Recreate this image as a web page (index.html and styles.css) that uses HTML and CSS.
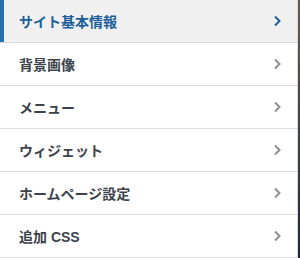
FILE: index.html
```html
<!DOCTYPE html>
<html lang="ja">

<head>
    <meta charset="UTF-8">
    <meta name="viewport" content="width=device-width, initial-scale=1.0">
    <title>カスタマイズ</title>
    <link rel="stylesheet" href="styles.css">
</head>

<body>
    <div class="frame">
        <ul class="panel-list">
            <li class="panel-item active">
                <span>サイト基本情報</span>
                <svg class="chevron" viewBox="0 0 9 12"><path d="M2 1.5 6.5 6 2 10.5" /></svg>
            </li>
            <li class="panel-item">
                <span>背景画像</span>
                <svg class="chevron" viewBox="0 0 9 12"><path d="M2 1.5 6.5 6 2 10.5" /></svg>
            </li>
            <li class="panel-item">
                <span>メニュー</span>
                <svg class="chevron" viewBox="0 0 9 12"><path d="M2 1.5 6.5 6 2 10.5" /></svg>
            </li>
            <li class="panel-item">
                <span>ウィジェット</span>
                <svg class="chevron" viewBox="0 0 9 12"><path d="M2 1.5 6.5 6 2 10.5" /></svg>
            </li>
            <li class="panel-item">
                <span>ホームページ設定</span>
                <svg class="chevron" viewBox="0 0 9 12"><path d="M2 1.5 6.5 6 2 10.5" /></svg>
            </li>
            <li class="panel-item">
                <span>追加 CSS</span>
                <svg class="chevron" viewBox="0 0 9 12"><path d="M2 1.5 6.5 6 2 10.5" /></svg>
            </li>
        </ul>
        <div class="edge"></div>
    </div>
</body>

</html>
```

FILE: styles.css
```css
body {
    margin: 0;
    background-color: white;
    font-family: "Liberation Sans", "Noto Sans CJK JP", sans-serif;
}

.frame {
    display: flex;
    width: 300px;
    height: 258px;
}

.panel-list {
    list-style: none;
    margin: 0;
    padding: 0;
    width: 297px;
    border-right: 1px solid #dcdcde;
    background-color: white;
}

.edge {
    flex: 1;
    background: linear-gradient(#6b5a4c, #3a3f4a 60%, #1d2740);
}

.panel-item {
    display: flex;
    align-items: center;
    justify-content: space-between;
    height: 42px;
    padding: 0 15px 0 19px;
    border-bottom: 1px solid #dcdcde;
    color: #3c434a;
    font-size: 14px;
    font-weight: bold;
}

.panel-item.active {
    background-color: #f0f0f1;
    color: #1f5f99;
    box-shadow: inset 4px 0 0 #2271b1;
}

.chevron {
    width: 9px;
    height: 12px;
    fill: none;
    stroke: #8c8f94;
    stroke-width: 2;
}

.panel-item.active .chevron {
    stroke: #1f5f99;
}
```
